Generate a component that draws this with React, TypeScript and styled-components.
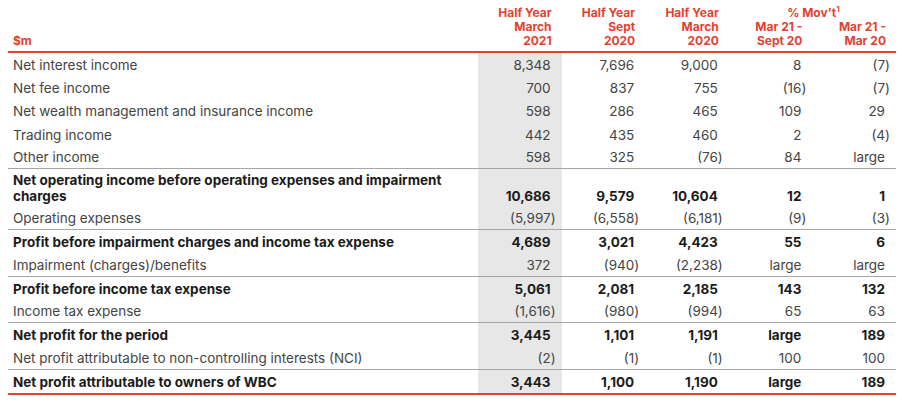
import React from "react";
import styled, { createGlobalStyle } from "styled-components";

const Global = createGlobalStyle`
  html, body { margin: 0; padding: 0; background: #ffffff; }
  body { font-family: Inter, "Open Sans", "Liberation Sans", sans-serif; }
`;

const RED = "#e5412f";
const COLS = "470px repeat(5, 1fr)";

const Page = styled.div`
  width: 888px;
  padding: 0 6px 0 8px;
`;

const Table = styled.div`
  display: flex;
  flex-direction: column;
  border-bottom: 2px solid ${RED};
`;

const Head = styled.div`
  display: grid;
  grid-template-columns: ${COLS};
  padding: 6px 0 3px;
  border-bottom: 2px solid ${RED};
  color: ${RED};
  font-weight: 700;
  font-size: 12px;
  line-height: 14px;
`;

const HeadLabel = styled.div`
  align-self: end;
  padding-left: 5px;
`;

const HeadCell = styled.div`
  text-align: right;
  padding-right: 10px;
  white-space: nowrap;
`;

const MovGroup = styled.div`
  grid-column: span 2;
  display: grid;
  grid-template-columns: 1fr 1fr;
`;

const MovTitle = styled.div`
  grid-column: span 2;
  text-align: center;
  padding-left: 2px;
  sup {
    font-size: 8px;
    line-height: 0;
    vertical-align: 5px;
  }
`;

const Row = styled.div<{ $tall?: boolean; $rule?: boolean }>`
  display: grid;
  grid-template-columns: ${COLS};
  box-sizing: border-box;
  height: ${(p) => (p.$tall ? "37.5px" : "23.3px")};
  border-bottom: ${(p) => (p.$rule ? "1px solid #a6a6a6" : "none")};
`;

const Label = styled.div<{ $bold?: boolean }>`
  align-self: center;
  padding-left: 5px;
  padding-right: 8px;
  font-size: 13.5px;
  line-height: 16px;
  font-weight: ${(p) => (p.$bold ? 700 : 400)};
  color: ${(p) => (p.$bold ? "#1b1b1b" : "#444444")};
`;

const Num = styled.div<{ $bold?: boolean; $shade?: boolean; $tall?: boolean }>`
  display: flex;
  align-items: ${(p) => (p.$tall ? "flex-end" : "center")};
  justify-content: flex-end;
  padding-right: 11px;
  padding-bottom: ${(p) => (p.$tall ? "3px" : "0")};
  background: ${(p) => (p.$shade ? "#e7e7e7" : "transparent")};
  font-size: 13.5px;
  line-height: 16px;
  white-space: nowrap;
  font-weight: ${(p) => (p.$bold ? 700 : 400)};
  color: ${(p) => (p.$bold ? "#1b1b1b" : "#444444")};
`;

const Close = styled.span`
  margin-right: -5px;
`;

type RowData = {
  label: string;
  v: string[];
  bold?: boolean;
  tall?: boolean;
  rule?: boolean;
};

const rows: RowData[] = [
  { label: "Net interest income", v: ["8,348", "7,696", "9,000", "8", "(7)"] },
  { label: "Net fee income", v: ["700", "837", "755", "(16)", "(7)"] },
  { label: "Net wealth management and insurance income", v: ["598", "286", "465", "109", "29"] },
  { label: "Trading income", v: ["442", "435", "460", "2", "(4)"] },
  { label: "Other income", v: ["598", "325", "(76)", "84", "large"], rule: true },
  {
    label: "Net operating income before operating expenses and impairment charges",
    v: ["10,686", "9,579", "10,604", "12", "1"],
    bold: true,
    tall: true,
  },
  { label: "Operating expenses", v: ["(5,997)", "(6,558)", "(6,181)", "(9)", "(3)"], rule: true },
  {
    label: "Profit before impairment charges and income tax expense",
    v: ["4,689", "3,021", "4,423", "55", "6"],
    bold: true,
  },
  { label: "Impairment (charges)/benefits", v: ["372", "(940)", "(2,238)", "large", "large"], rule: true },
  { label: "Profit before income tax expense", v: ["5,061", "2,081", "2,185", "143", "132"], bold: true },
  { label: "Income tax expense", v: ["(1,616)", "(980)", "(994)", "65", "63"], rule: true },
  { label: "Net profit for the period", v: ["3,445", "1,101", "1,191", "large", "189"], bold: true },
  {
    label: "Net profit attributable to non-controlling interests (NCI)",
    v: ["(2)", "(1)", "(1)", "100", "100"],
    rule: true,
  },
  { label: "Net profit attributable to owners of WBC", v: ["3,443", "1,100", "1,190", "large", "189"], bold: true },
];

function Value({ text }: { text: string }) {
  if (text.startsWith("(") && text.endsWith(")")) {
    return (
      <>
        {text.slice(0, -1)}
        <Close>)</Close>
      </>
    );
  }
  return <>{text}</>;
}

export default function App() {
  return (
    <Page>
      <Global />
      <Table>
        <Head>
          <HeadLabel>$m</HeadLabel>
          <HeadCell>
            Half Year
            <br />
            March
            <br />
            2021
          </HeadCell>
          <HeadCell>
            Half Year
            <br />
            Sept
            <br />
            2020
          </HeadCell>
          <HeadCell>
            Half Year
            <br />
            March
            <br />
            2020
          </HeadCell>
          <MovGroup>
            <MovTitle>
              % Mov't<sup>1</sup>
            </MovTitle>
            <HeadCell>
              Mar 21 -
              <br />
              Sept 20
            </HeadCell>
            <HeadCell>
              Mar 21 -
              <br />
              Mar 20
            </HeadCell>
          </MovGroup>
        </Head>
        {rows.map((r, i) => (
          <Row key={i} $tall={r.tall} $rule={r.rule}>
            <Label $bold={r.bold}>{r.label}</Label>
            {r.v.map((val, j) => (
              <Num key={j} $bold={r.bold} $shade={j === 0} $tall={r.tall}>
                <Value text={val} />
              </Num>
            ))}
          </Row>
        ))}
      </Table>
    </Page>
  );
}
